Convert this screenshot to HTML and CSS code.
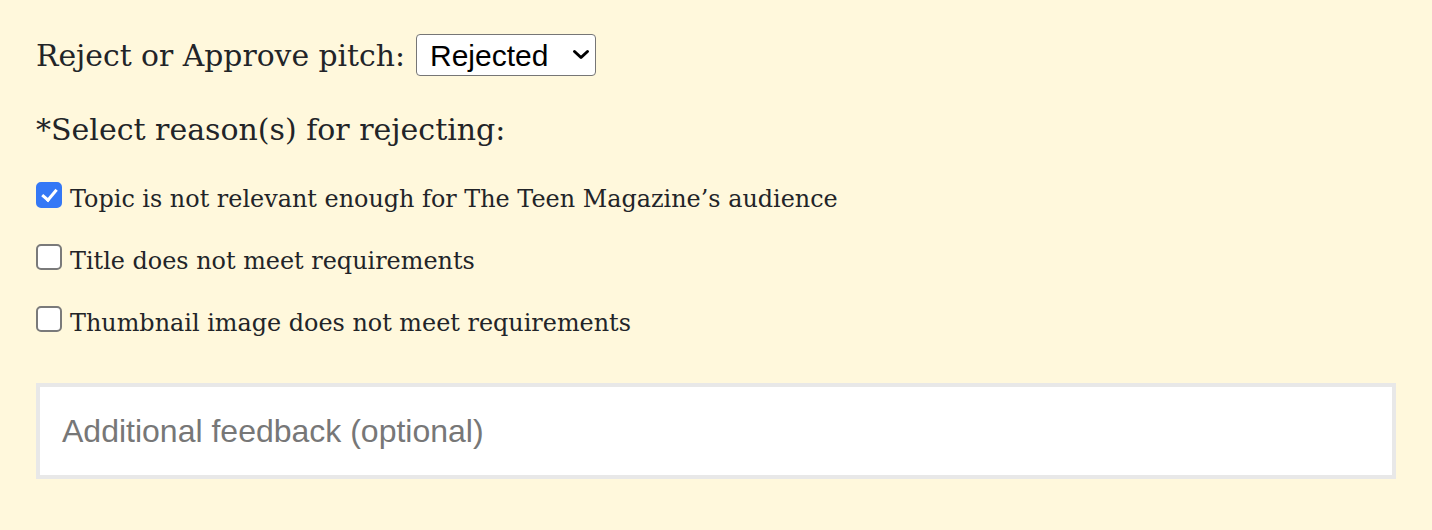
FILE: index.html
```html
<!DOCTYPE html>
<html lang="en">
<head>
<meta charset="utf-8">
<title>Pitch review</title>
<link rel="stylesheet" href="styles.css">
</head>
<body>
<form class="review">
  <div class="decision">
    <label class="decision-label" for="status">Reject or Approve pitch:</label>
    <span class="select-wrap">
      <select id="status" class="status-select">
        <option>Approved</option>
        <option selected>Rejected</option>
      </select>
      <svg class="chevron" width="18" height="11" viewBox="0 0 18 11" aria-hidden="true"><path d="M2.5 2.5 L9 8.5 L15.5 2.5" fill="none" stroke="#000" stroke-width="3" stroke-linecap="round" stroke-linejoin="round"/></svg>
    </span>
  </div>
  <p class="reasons-title">*Select reason(s) for rejecting:</p>
  <div class="reasons">
    <label class="reason"><input type="checkbox" class="box" checked><span class="reason-text">Topic is not relevant enough for The Teen Magazine’s audience</span></label>
    <label class="reason"><input type="checkbox" class="box"><span class="reason-text">Title does not meet requirements</span></label>
    <label class="reason"><input type="checkbox" class="box"><span class="reason-text">Thumbnail image does not meet requirements</span></label>
  </div>
  <textarea class="feedback" placeholder="Additional feedback (optional)"></textarea>
</form>
</body>
</html>
```
FILE: styles.css
```css
html, body {
  margin: 0;
  padding: 0;
  background: #fff8dc;
}
body {
  font-family: "DejaVu Serif", "Liberation Serif", serif;
  color: #222428;
}
.review {
  display: flex;
  flex-direction: column;
  padding: 34px 36px 0 36px;
}
.decision {
  display: flex;
  align-items: center;
  gap: 11px;
  height: 42px;
}
.decision-label {
  font-size: 29.8px;
}
.select-wrap {
  position: relative;
  display: inline-block;
}
.status-select {
  appearance: none;
  -webkit-appearance: none;
  width: 180px;
  height: 42px;
  box-sizing: border-box;
  border: 1px solid #767676;
  border-radius: 4px;
  background: #fff;
  padding: 0 0 0 13px;
  font-family: "Liberation Sans", Arial, sans-serif;
  font-size: 30px;
  color: #000;
}
.chevron {
  position: absolute;
  right: 6px;
  top: 15px;
  pointer-events: none;
}
.reasons-title {
  margin: 0;
  margin-top: 33px;
  font-size: 30px;
  line-height: 42px;
}
.reasons {
  display: flex;
  flex-direction: column;
  gap: 36px;
  margin-top: 31px;
}
.reason {
  display: flex;
  align-items: center;
  gap: 8px;
  font-size: 23.9px;
  height: 26px;
}
.reason-text {
  padding-top: 7px;
}
.box {
  appearance: none;
  -webkit-appearance: none;
  margin: 0;
  width: 26px;
  height: 26px;
  box-sizing: border-box;
  border: 2px solid #7a7a7a;
  border-radius: 5px;
  background: #fff;
  position: relative;
  flex: none;
}
.box:checked {
  background: #3478f6;
  border-color: #3478f6;
}
.box:checked::after {
  content: "";
  position: absolute;
  left: 7px;
  top: 2px;
  width: 6px;
  height: 12px;
  border: solid #fff;
  border-width: 0 3.5px 3.5px 0;
  transform: rotate(40deg);
}
.feedback {
  margin-top: 51px;
  width: 1360px;
  height: 96px;
  box-sizing: border-box;
  border: 4px solid #e8e8e8;
  background: #fff;
  padding: 26px 22px;
  font-family: "Liberation Sans", Arial, sans-serif;
  font-size: 32px;
  resize: none;
  outline: none;
}
.feedback::placeholder {
  color: #777;
}
```
